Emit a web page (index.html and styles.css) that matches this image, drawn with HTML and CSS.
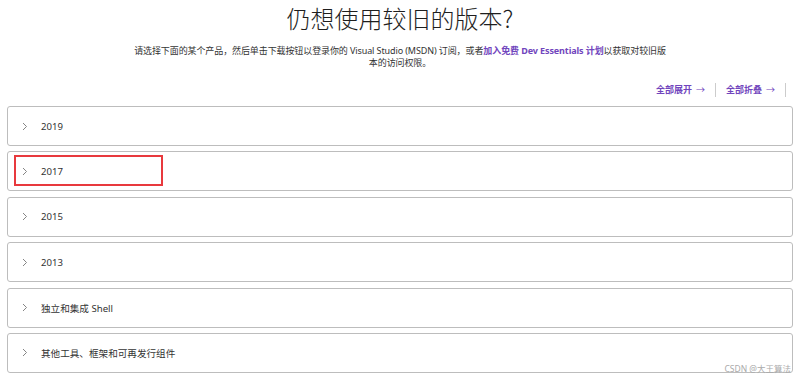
FILE: index.html
```html
<!DOCTYPE html>
<html lang="zh-CN">
<head>
    <meta charset="UTF-8">
    <title>仍想使用较旧的版本?</title>
    <link rel="stylesheet" href="styles.css">
</head>
<body>
    <div class="page">
        <h1 class="title">仍想使用较旧的版本?</h1>
        <p class="intro">请选择下面的某个产品，然后单击下载按钮以登录你的 Visual Studio (MSDN) 订阅，或者<a href="#">加入免费 Dev Essentials 计划</a>以获取对较旧版<br>本的访问权限。</p>

        <div class="toggles">
            <a href="#" class="toggle">全部展开 <span class="arrow">→</span></a>
            <a href="#" class="toggle">全部折叠 <span class="arrow">→</span></a>
        </div>

        <div class="list">
            <div class="item">
                <svg class="chev" width="6" height="9" viewBox="0 0 6 9"><polyline points="1,1 4.5,4.5 1,8" fill="none" stroke="#777" stroke-width="0.9"/></svg>
                <span>2019</span>
            </div>
            <div class="item">
                <svg class="chev" width="6" height="9" viewBox="0 0 6 9"><polyline points="1,1 4.5,4.5 1,8" fill="none" stroke="#777" stroke-width="0.9"/></svg>
                <span>2017</span>
                <div class="mark"></div>
            </div>
            <div class="item">
                <svg class="chev" width="6" height="9" viewBox="0 0 6 9"><polyline points="1,1 4.5,4.5 1,8" fill="none" stroke="#777" stroke-width="0.9"/></svg>
                <span>2015</span>
            </div>
            <div class="item">
                <svg class="chev" width="6" height="9" viewBox="0 0 6 9"><polyline points="1,1 4.5,4.5 1,8" fill="none" stroke="#777" stroke-width="0.9"/></svg>
                <span>2013</span>
            </div>
            <div class="item">
                <svg class="chev" width="6" height="9" viewBox="0 0 6 9"><polyline points="1,1 4.5,4.5 1,8" fill="none" stroke="#777" stroke-width="0.9"/></svg>
                <span>独立和集成 Shell</span>
            </div>
            <div class="item">
                <svg class="chev" width="6" height="9" viewBox="0 0 6 9"><polyline points="1,1 4.5,4.5 1,8" fill="none" stroke="#777" stroke-width="0.9"/></svg>
                <span>其他工具、框架和可再发行组件</span>
            </div>
        </div>

        <div class="watermark">CSDN @大王算法</div>
    </div>
</body>
</html>
```

FILE: styles.css
```css
body {
    margin: 0;
    background: #fff;
    color: #222;
    font-family: "Segoe UI", "Noto Sans", "Noto Sans CJK SC", sans-serif;
}
.page {
    position: relative;
    width: 800px;
    height: 378px;
    overflow: hidden;
}
.title {
    margin: 0;
    padding-top: 2px;
    text-align: center;
    font-family: "Noto Sans CJK SC", sans-serif;
    font-weight: 300;
    font-size: 24px;
    line-height: 32px;
    color: #1e1e1e;
}
.intro {
    margin: 11px 0 0;
    text-align: center;
    white-space: nowrap;
    font-size: 9px;
    letter-spacing: -0.1px;
    line-height: 12px;
    color: #333;
}
.intro a {
    color: #7145bd;
    font-weight: bold;
    text-decoration: none;
}
.toggles {
    display: flex;
    justify-content: flex-end;
    margin-top: 14px;
    padding-right: 14px;
    height: 14px;
}
.toggle {
    display: flex;
    align-items: center;
    padding: 0 10px 0 10px;
    border-right: 1px solid #ccc;
    color: #7145bd;
    font-weight: bold;
    font-size: 9px;
    line-height: 14px;
    text-decoration: none;
}
.toggle .arrow {
    margin-left: 4px;
    font-weight: normal;
}
.list {
    display: flex;
    flex-direction: column;
    gap: 5.4px;
    margin: 9px 7px 0;
}
.item {
    position: relative;
    display: flex;
    align-items: center;
    height: 38px;
    padding-left: 14px;
    border: 1px solid #bdbdbd;
    border-radius: 3px;
    font-size: 9.6px;
    color: #333;
}
.chev {
    margin-right: 13px;
}
.mark {
    position: absolute;
    left: 6px;
    top: 3px;
    width: 145px;
    height: 27px;
    border: 2px solid #e8393d;
}
.watermark {
    position: absolute;
    right: 9px;
    bottom: 4px;
    font-size: 8.5px;
    color: #aaa;
}
```
